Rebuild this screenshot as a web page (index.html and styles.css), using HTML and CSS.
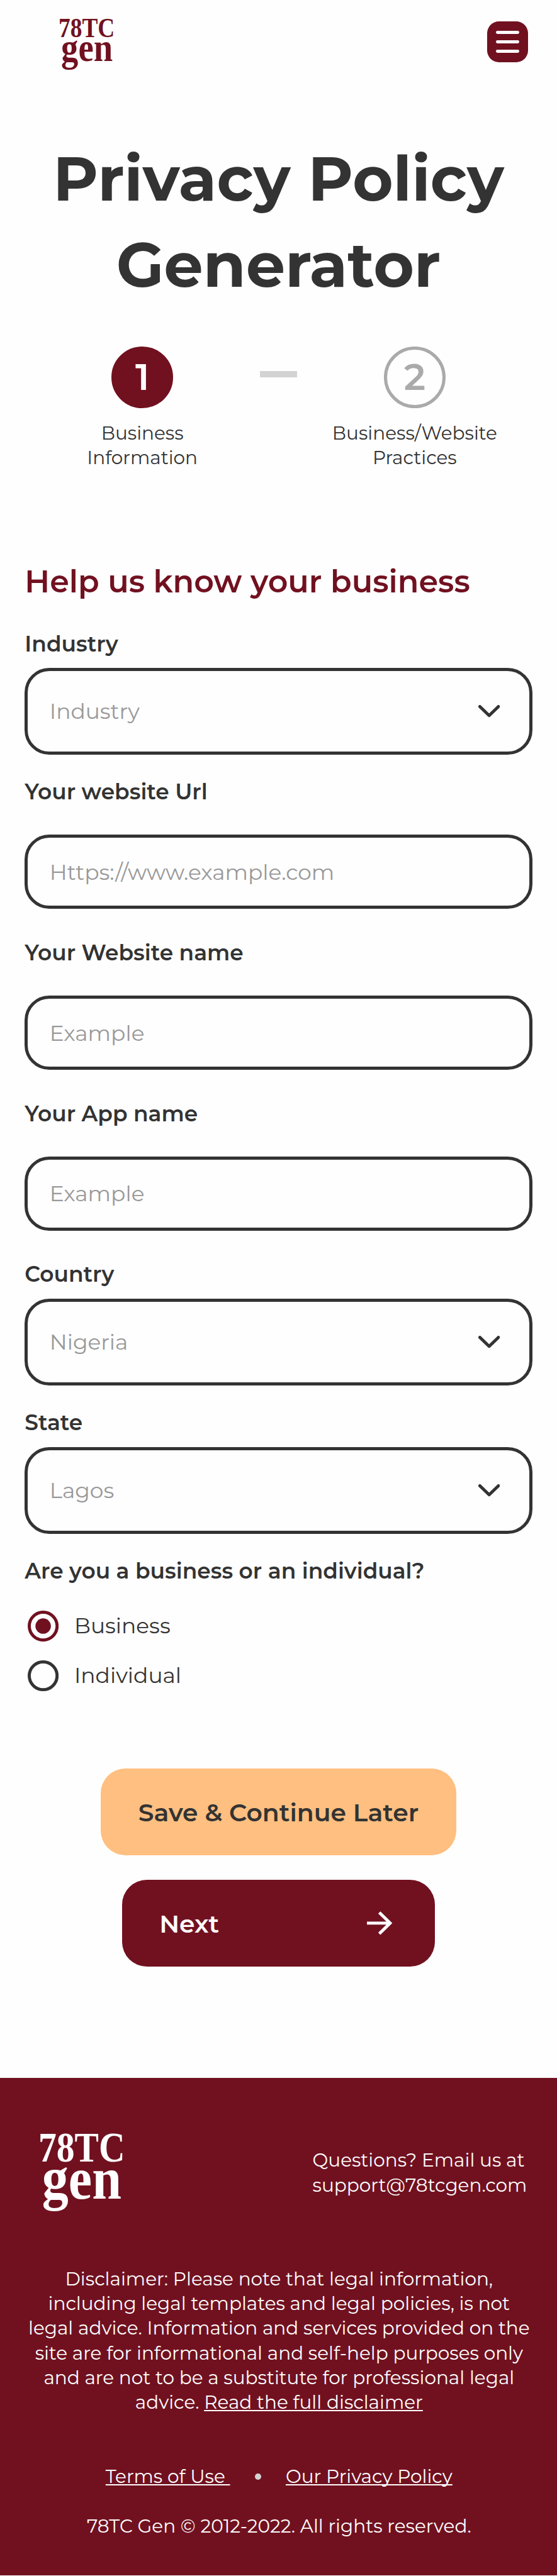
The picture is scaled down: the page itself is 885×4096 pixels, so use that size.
FILE: index.html
```
<!DOCTYPE html>
<html lang="en">
<head>
<meta charset="utf-8">
<title>Privacy Policy Generator</title>
<link rel="stylesheet" href="styles.css">
</head>
<body>
<header class="topbar">
  <svg class="topbar-logo" viewBox="0 0 110 100" role="img" aria-label="78TC gen">
    <text class="logo-top" x="0" y="36" textLength="109" lengthAdjust="spacingAndGlyphs">78TC</text>
    <text class="logo-bottom" x="5" y="83" textLength="100" lengthAdjust="spacingAndGlyphs">gen</text>
  </svg>
  <button class="menu" aria-label="Menu"><span class="menu-bar"></span><span class="menu-bar"></span><span class="menu-bar"></span></button>
</header>

<main>
  <h1 class="title">Privacy Policy<br>Generator</h1>

  <div class="steps">
    <div class="step">
      <span class="step-number step-active">1</span>
      <span class="step-label">Business<br>Information</span>
    </div>
    <span class="step-dash"></span>
    <div class="step">
      <span class="step-number">2</span>
      <span class="step-label">Business/Website<br>Practices</span>
    </div>
  </div>

  <form class="form">
    <h2 class="heading">Help us know your business</h2>

    <div class="field field-select">
      <label class="label">Industry</label>
      <div class="box"><span class="value">Industry</span><svg class="chevron" viewBox="0 0 42 24"><path d="M3 3l18 17.5L39 3"/></svg></div>
    </div>
    <div class="field field-text">
      <label class="label">Your website Url</label>
      <div class="box"><span class="value">Https://www.example.com</span></div>
    </div>
    <div class="field field-text">
      <label class="label">Your Website name</label>
      <div class="box"><span class="value">Example</span></div>
    </div>
    <div class="field field-text">
      <label class="label">Your App name</label>
      <div class="box"><span class="value">Example</span></div>
    </div>
    <div class="field field-select">
      <label class="label">Country</label>
      <div class="box"><span class="value">Nigeria</span><svg class="chevron" viewBox="0 0 42 24"><path d="M3 3l18 17.5L39 3"/></svg></div>
    </div>
    <div class="field field-select">
      <label class="label">State</label>
      <div class="box"><span class="value">Lagos</span><svg class="chevron" viewBox="0 0 42 24"><path d="M3 3l18 17.5L39 3"/></svg></div>
    </div>

    <div class="label">Are you a business or an individual?</div>
    <div class="radios">
      <label class="radio radio-on"><svg class="radio-mark" viewBox="0 0 60 60"><circle class="ring" cx="30" cy="30" r="27"/><circle class="dot" cx="30" cy="30" r="15"/></svg>Business</label>
      <label class="radio"><svg class="radio-mark" viewBox="0 0 60 60"><circle class="ring" cx="30" cy="30" r="27"/></svg>Individual</label>
    </div>

    <div class="actions">
      <button type="button" class="button save"><span class="value">Save &amp; Continue Later</span></button>
      <button type="button" class="button next"><span class="value">Next</span><svg class="arrow" viewBox="0 0 49 46"><path d="M0 23h44M24 2.5L45 23 24 43.5"/></svg></button>
    </div>
  </form>
</main>

<footer class="footer">
  <div class="footer-top">
    <svg class="footer-logo" viewBox="0 0 170 150" role="img" aria-label="78TC gen">
      <text class="logo-top" x="0" y="54" textLength="168" lengthAdjust="spacingAndGlyphs">78TC</text>
      <text class="logo-bottom" x="7" y="126" textLength="154" lengthAdjust="spacingAndGlyphs">gen</text>
    </svg>
    <p class="contact">Questions? Email us at<br>support@78tcgen.com</p>
  </div>
  <p class="disclaimer">Disclaimer: Please note that legal information,<br>including legal templates and legal policies, is not<br>legal advice. Information and services provided on the<br>site are for informational and self-help purposes only<br>and are not to be a substitute for professional legal<br>advice. <a class="link">Read the full disclaimer</a></p>
  <nav class="links"><a class="link">Terms of Use&nbsp;</a><span class="bullet"></span><a class="link">Our Privacy Policy</a></nav>
  <p class="copyright">78TC Gen © 2012-2022. All rights reserved.</p>
</footer>
</body>
</html>
```
FILE: styles.css
```
/* 108rem spans the full viewport width */
html { font-size: calc(100vw / 108); }
* { box-sizing: border-box; margin: 0; padding: 0; }
body {
  background: #fefefe;
  color: #333;
  font-family: Montserrat, Inter, "Open Sans", sans-serif;
  font-size: 3.6rem;
  line-height: 4.8rem;
}
button { border: 0; font: inherit; color: inherit; }

.topbar {
  display: flex;
  justify-content: space-between;
  align-items: flex-start;
  height: 26.3rem;
  padding: 3.5rem 5.6rem 0 11.3rem;
}
.topbar-logo { width: 11rem; height: 10rem; fill: #711120; overflow: visible; }
.topbar-logo text, .footer-logo text { font-family: "Liberation Serif", serif; font-weight: 700; }
.topbar-logo .logo-top { font-size: 54px; }
.topbar-logo .logo-bottom { font-size: 77px; }
.menu {
  display: flex;
  flex-direction: column;
  align-items: center;
  justify-content: center;
  gap: 1.2rem;
  width: 8rem;
  height: 8rem;
  margin-top: 0.6rem;
  border-radius: 2.3rem;
  background: #711120;
}
.menu-bar { width: 4.6rem; height: 0.6rem; border-radius: 0.3rem; background: #fefefe; }

.title { font-size: 12rem; line-height: 16.8rem; font-weight: 700; text-align: center; }

.steps {
  display: grid;
  grid-template-columns: 1fr 7.2rem 1fr;
  padding: 7.3rem 4.8rem 0;
}
.step { display: flex; flex-direction: column; align-items: center; gap: 2.4rem; text-align: center; }
.step-number {
  display: flex;
  align-items: center;
  justify-content: center;
  width: 12rem;
  height: 12rem;
  border: 5px solid #aaa;
  border-radius: 50%;
  color: #aaa;
  font-size: 7.2rem;
  font-weight: 600;
}
.step-active { border-color: #711120; background: #711120; color: #fefefe; }
.step-dash { height: 1.2rem; margin-top: 4.8rem; background: #d3d3d3; }

.form { padding: 18rem 4.8rem 21.6rem; }
.heading { color: #711120; font-size: 6rem; line-height: 7.2rem; font-weight: 600; margin-bottom: 5.4rem; }
.label { display: block; padding-top: 0.3rem; font-size: 4.2rem; line-height: 5.7rem; font-weight: 600; }
.field-select { margin-bottom: 4.2rem; }
.field-text { margin-bottom: 5.4rem; }
.box {
  display: flex;
  align-items: center;
  justify-content: space-between;
  border: 5px solid #333;
  border-radius: 4.8rem;
  padding: 0 5.7rem 0 4.2rem;
  color: #999;
  font-size: 4.2rem;
}
.value { padding-top: 0.3rem; }
.field-select .box { height: 16.8rem; margin-top: 1.8rem; }
.field-text .box { height: 14.4rem; margin-top: 5.4rem; }
.chevron { width: 4.2rem; height: 2.4rem; fill: none; stroke: #333; stroke-width: 6; stroke-linecap: round; stroke-linejoin: round; }

.radios { display: flex; flex-direction: column; gap: 3.6rem; padding: 4.8rem 0 15rem 0.6rem; }
.radio { display: flex; align-items: center; gap: 3rem; font-size: 4.2rem; line-height: 6rem; }
.radio-mark { width: 6rem; height: 6rem; }
.ring { fill: none; stroke: #333; stroke-width: 6; }
.radio-on .ring { stroke: #711120; }
.dot { fill: #711120; }

.actions { display: flex; flex-direction: column; align-items: center; gap: 4.8rem; }
.button { display: flex; align-items: center; height: 16.8rem; border-radius: 4.8rem; font-size: 4.8rem; font-weight: 600; }
.save { justify-content: center; width: 69rem; background: #ffbf80; }
.next { justify-content: space-between; width: 60.6rem; padding: 0 8.3rem 0 7.2rem; background: #711120; color: #fefefe; }
.arrow { width: 4.9rem; height: 4.6rem; fill: none; stroke: #fefefe; stroke-width: 6; }

.footer { height: 96.6rem; padding: 10.9rem 0 0 0.2rem; background: #711120; color: #fefefe; text-align: center; }
.footer-top { display: grid; grid-template-columns: 53.1rem 1fr; align-items: center; padding-left: 7.3rem; text-align: left; }
.footer-logo { width: 17rem; height: 15rem; fill: #fefefe; overflow: visible; }
.footer-logo .logo-top { font-size: 82px; }
.footer-logo .logo-bottom { font-size: 116px; }
.disclaimer { margin-top: 10.7rem; }
.link { text-decoration: underline; text-decoration-skip-ink: none; }
.links { display: flex; align-items: center; justify-content: center; gap: 4.8rem; margin-top: 9.6rem; }
.bullet { width: 1.2rem; height: 1.2rem; border-radius: 50%; background: #d3d3d3; }
.copyright { margin-top: 4.8rem; }
```
